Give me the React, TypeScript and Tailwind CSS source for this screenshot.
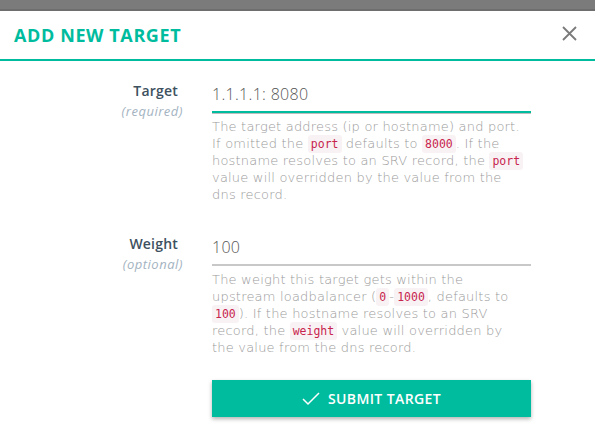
import React from "react";

const Code: React.FC<{ children: React.ReactNode }> = ({ children }) => (
  <code className="rounded-[3px] bg-[#f9f2f4] px-[3px] py-[2px] font-['DejaVu_Sans_Mono',monospace] text-[11.5px] font-normal leading-[10px] tracking-normal text-[#c7254e]">
    {children}
  </code>
);

interface fieldProps {
  label: string;
  hint: string;
  value: string;
  focused?: boolean;
  children: React.ReactNode;
}

const Field: React.FC<fieldProps> = ({ label, hint, value, focused, children }) => (
  <div className="flex">
    <div className="w-[183px] shrink-0 text-right">
      <div className="pr-[5px] text-[14px] font-semibold leading-[18px] tracking-[0.2px] text-[#3d5160]">{label}</div>
      <div className="mt-[3px] text-[13px] italic leading-[16px] tracking-[0.5px] text-[#a3b3bf]">{hint}</div>
    </div>
    <div className="ml-[29px] w-[319px]">
      <div
        className={
          focused
            ? "h-[31px] border-b-2 border-[#00bc9e] pt-[2px] text-[16px] font-light leading-[20px] tracking-[0.3px] text-[#555] shadow-[0_1px_0_#bdbdbd]"
            : "h-[31px] border-b-2 border-[#c8c8c8] pt-[2px] text-[16px] font-light leading-[20px] tracking-[0.3px] text-[#555]"
        }
      >
        {value}
      </div>
      <p className="mt-[5px] font-['DejaVu_Sans',sans-serif] text-[13px] font-extralight leading-[17px] tracking-[0.2px] text-[#9a9a9a]">
        {children}
      </p>
    </div>
  </div>
);

export default function App() {
  return (
    <div className="h-[447px] w-[595px] overflow-hidden bg-white font-['Open_Sans',sans-serif]">
      <div className="h-[11px] border-b-2 border-[#6e6e6e] bg-[#7b7b7b]" />
      <div className="flex h-[50px] items-center justify-between border-b-2 border-[#00bc9e] pl-[14px] pr-[18px]">
        <h1 className="text-[18px] font-bold tracking-[0.6px] text-[#00bc9e]">ADD NEW TARGET</h1>
        <svg width="15" height="15" viewBox="0 0 15 15" className="mb-[4px]">
          <path d="M1 1 L14 14 M14 1 L1 14" stroke="#7a7a7a" strokeWidth="1.8" />
        </svg>
      </div>

      <div className="pt-[21px]">
        <Field label="Target" hint="(required)" value="1.1.1.1:  8080" focused>
          The target address (ip or hostname) and port.
          <br />
          If omitted the <Code>port</Code> defaults to <Code>8000</Code>. If the
          <br />
          hostname resolves to an SRV record, the <Code>port</Code>
          <br />
          value will overridden by the value from the
          <br />
          dns record.
        </Field>
        <div className="h-[32px]" />
        <Field label="Weight" hint="(optional)" value="100">
          The weight this target gets within the
          <br />
          upstream loadbalancer (<Code>0</Code>-<Code>1000</Code>, defaults to
          <br />
          <Code>100</Code>). If the hostname resolves to an SRV
          <br />
          record, the <Code>weight</Code> value will overridden by
          <br />
          the value from the dns record.
        </Field>
      </div>

      <div className="ml-[212px] mt-[24px] w-[319px]">
        <button className="flex h-[37px] w-full items-center justify-center gap-[8px] bg-[#00bc9e] text-[14px] font-semibold tracking-[0.4px] text-white shadow-[0_2px_4px_rgba(0,0,0,0.3)]">
          <svg width="18" height="14" viewBox="0 0 18 14">
            <path d="M1 7 L6 12 L17 1" stroke="white" strokeWidth="1.5" fill="none" />
          </svg>
          SUBMIT TARGET
        </button>
      </div>
    </div>
  );
}
